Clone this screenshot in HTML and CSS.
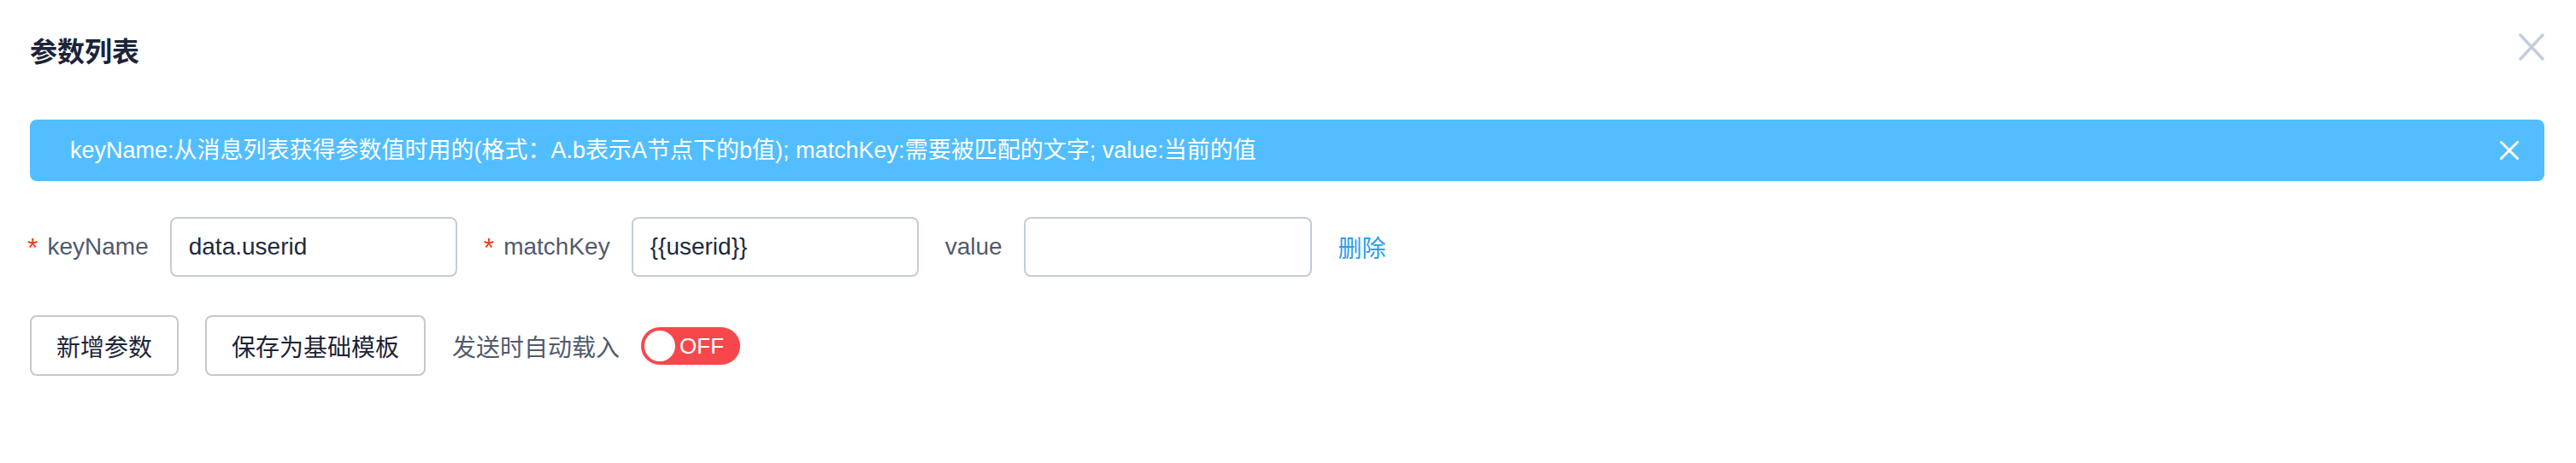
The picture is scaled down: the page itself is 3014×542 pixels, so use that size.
FILE: index.html
```html
<!DOCTYPE html>
<html lang="zh">
<head>
<meta charset="utf-8">
<link rel="stylesheet" href="styles.css">
</head>
<body>
<div class="modal">
  <div class="header">
    <div class="title">参数列表</div>
    <svg class="close" width="30" height="32" viewBox="0 0 30 32"><path d="M2 2 L28 30 M28 2 L2 30" stroke="#c5cdd9" stroke-width="3.5" stroke-linecap="round" fill="none"/></svg>
  </div>
  <div class="alert">
    <span class="alert-text">keyName:从消息列表获得参数值时用的(格式：A.b表示A节点下的b值); matchKey:需要被匹配的文字; value:当前的值</span>
    <svg class="alert-close" width="22" height="22" viewBox="0 0 22 22"><path d="M1.5 1.5 L20.5 20.5 M20.5 1.5 L1.5 20.5" stroke="#ffffff" stroke-width="3" stroke-linecap="round" fill="none"/></svg>
  </div>
  <div class="form-row">
    <div class="form-item">
      <label class="label"><span class="req">*</span>keyName</label>
      <div class="input">data.userid</div>
    </div>
    <div class="form-item">
      <label class="label"><span class="req">*</span>matchKey</label>
      <div class="input">{{userid}}</div>
    </div>
    <div class="form-item">
      <label class="label">value</label>
      <div class="input input-wide"></div>
    </div>
    <a class="link">删除</a>
  </div>
  <div class="action-row">
    <button class="btn">新增参数</button>
    <button class="btn">保存为基础模板</button>
    <span class="switch-label">发送时自动载入</span>
    <span class="switch"><span class="knob"></span><span class="switch-text">OFF</span></span>
  </div>
</div>
</body>
</html>
```
FILE: styles.css
```css
html, body {
  margin: 0;
  padding: 0;
  background: #ffffff;
}
body {
  width: 3014px;
  height: 542px;
  font-family: "Liberation Sans", "Noto Sans CJK SC", sans-serif;
  color: #17233d;
}
.modal {
  display: flex;
  flex-direction: column;
}
.header {
  height: 116px;
  display: flex;
  align-items: center;
  justify-content: space-between;
  padding: 0 37px 0 35px;
}
.title {
  font-family: "Noto Sans CJK SC", sans-serif;
  font-weight: 700;
  font-size: 32px;
  color: #1c2438;
  line-height: 40px;
}
.close {
  margin-top: -6px;
  display: block;
}
.alert {
  margin: 24px 37px 0 35px;
  height: 72px;
  background: #52beff;
  border-radius: 8px;
  display: flex;
  align-items: center;
  justify-content: space-between;
  padding: 0 30px 0 47px;
  color: #ffffff;
  font-size: 27px;
}
.alert-text {
  line-height: 34px;
}
.alert-close {
  display: block;
}
.form-row {
  margin-top: 42px;
  height: 70px;
  display: flex;
  align-items: center;
  padding-left: 32px;
  gap: 31px;
}
.form-item {
  display: flex;
  align-items: center;
  gap: 25px;
}
.label {
  font-size: 28px;
  color: #515a6e;
  line-height: 40px;
}
.req {
  color: #ed4014;
  font-size: 32px;
  line-height: 20px;
  vertical-align: -3px;
  margin-right: 11px;
}
.input {
  box-sizing: border-box;
  width: 336px;
  height: 70px;
  border: 2px solid #c5ccd7;
  border-radius: 8px;
  padding: 0 20px;
  font-size: 28px;
  line-height: 66px;
  color: #1f2a3d;
}
.input-wide {
  width: 337px;
}
.link {
  font-family: "Noto Sans CJK SC", sans-serif;
  font-size: 28px;
  color: #2d9bf0;
}
.action-row {
  margin-top: 45px;
  height: 71px;
  display: flex;
  align-items: center;
  padding-left: 35px;
}
.btn {
  box-sizing: border-box;
  height: 71px;
  padding: 0 29px;
  border: 2px solid #c8c8c8;
  border-radius: 8px;
  background: #ffffff;
  font-family: "Noto Sans CJK SC", sans-serif;
  font-size: 28px;
  color: #1c2438;
  margin-right: 31px;
}
.switch-label {
  font-family: "Noto Sans CJK SC", sans-serif;
  font-size: 28px;
  color: #515a6e;
  margin-right: 25px;
}
.switch {
  width: 116px;
  height: 44px;
  border-radius: 22px;
  background: #f6484c;
  display: flex;
  align-items: center;
  padding-left: 4px;
  box-sizing: border-box;
}
.knob {
  width: 36px;
  height: 36px;
  border-radius: 50%;
  background: #ffffff;
}
.switch-text {
  margin-left: 5px;
  color: #ffffff;
  font-size: 26px;
  line-height: 30px;
}
```
